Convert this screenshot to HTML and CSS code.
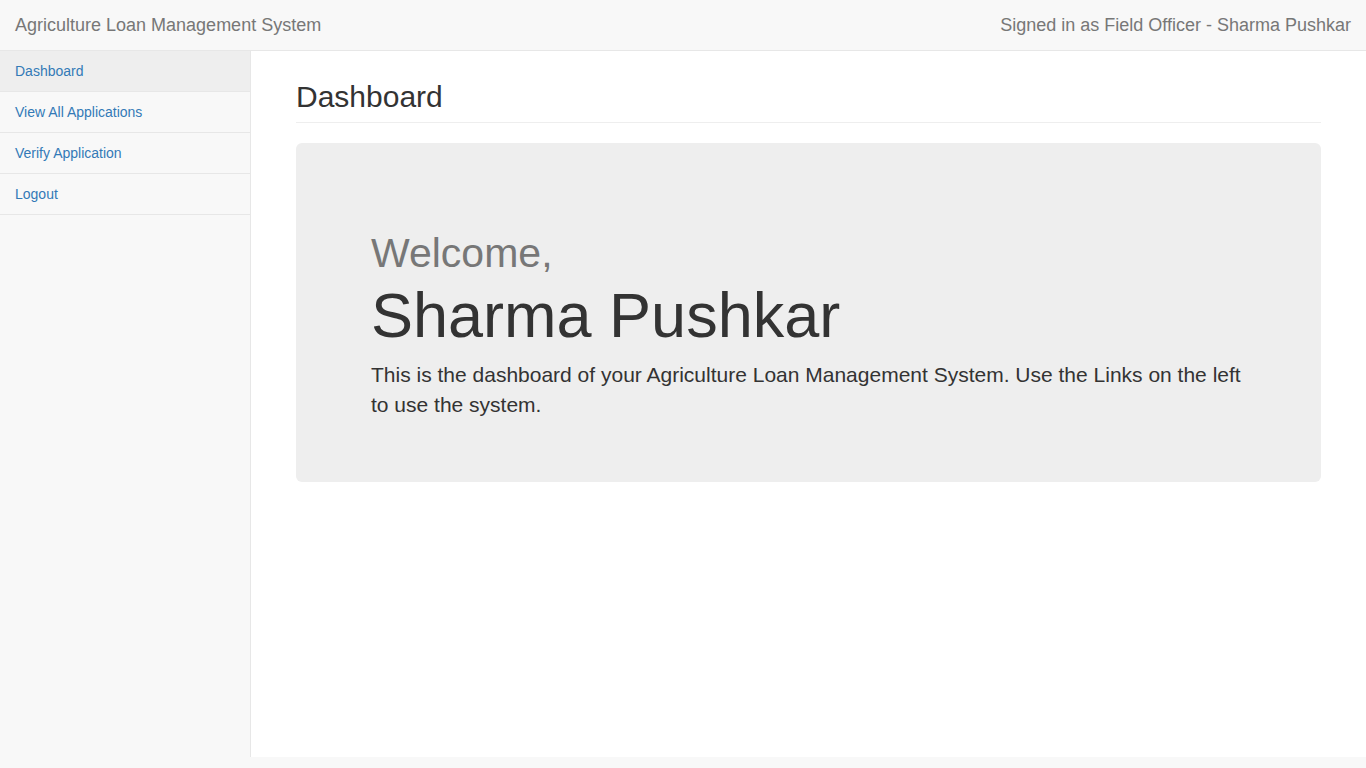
FILE: index.html
```html
<!DOCTYPE html>
<html lang="en">
<head>
<meta charset="utf-8">
<title>Agriculture Loan Management System</title>
<link rel="stylesheet" href="styles.css">
</head>
<body>
<nav class="topbar">
  <a class="brand" href="#">Agriculture Loan Management System</a>
  <span class="signed">Signed in as Field Officer - Sharma Pushkar</span>
</nav>
<div class="wrapper">
  <aside class="sidebar">
    <ul class="side-nav">
      <li class="active"><a href="#">Dashboard</a></li>
      <li><a href="#">View All Applications</a></li>
      <li><a href="#">Verify Application</a></li>
      <li><a href="#">Logout</a></li>
    </ul>
  </aside>
  <main class="page-wrapper">
    <div class="col">
      <h1 class="page-header">Dashboard</h1>
      <div class="jumbotron">
        <div class="jumbo-inner">
          <h2 class="welcome">Welcome,</h2>
          <h1 class="name">Sharma Pushkar</h1>
          <p class="lead">This is the dashboard of your Agriculture Loan Management System. Use the Links on the left to use the system.</p>
        </div>
      </div>
    </div>
  </main>
</div>
</body>
</html>
```

FILE: styles.css
```css
* { box-sizing: border-box; }

html, body {
  margin: 0;
  padding: 0;
}

body {
  background: #f8f8f8;
  font-family: "Liberation Sans", Arial, Helvetica, sans-serif;
  font-size: 14px;
  line-height: 1.42857143;
  color: #333;
}

a { text-decoration: none; }

.topbar {
  height: 51px;
  background: #f8f8f8;
  border-bottom: 1px solid #e7e7e7;
  display: flex;
  justify-content: space-between;
  align-items: center;
  padding: 0 15px;
}

.brand,
.signed {
  font-size: 18px;
  line-height: 20px;
  color: #777;
}

.wrapper {
  display: flex;
  align-items: stretch;
}

.sidebar {
  width: 250px;
  flex: 0 0 250px;
  background: #f8f8f8;
}

.side-nav {
  list-style: none;
  margin: 0;
  padding: 0;
}

.side-nav li {
  border-bottom: 1px solid #e7e7e7;
}

.side-nav li a {
  display: block;
  padding: 10px 15px;
  line-height: 20px;
  font-size: 14px;
  color: #337ab7;
}

.side-nav li.active a {
  background: #eee;
}

.page-wrapper {
  flex: 1;
  min-height: 706px;
  background: #fff;
  border-left: 1px solid #e7e7e7;
  padding: 0 30px;
}

.col {
  padding: 0 15px;
}

.page-header {
  margin: 29px 0 20px;
  padding-bottom: 9px;
  border-bottom: 1px solid #eee;
  font-size: 30px;
  font-weight: 500;
  line-height: 1.1;
  color: #333;
}

.jumbotron {
  background: #eee;
  border-radius: 6px;
  padding: 48px 60px 50px;
}

.jumbo-inner {
  padding: 0 15px;
  display: flex;
  flex-direction: column;
}

.welcome {
  margin: 40px 0 0;
  font-size: 41px;
  font-weight: 500;
  line-height: 1.1;
  color: #777;
}

.name {
  margin: 5px 0 0;
  font-size: 63px;
  font-weight: 500;
  line-height: 1.1;
  color: #333;
}

.lead {
  margin: 10px 0 12px;
  font-size: 21px;
  font-weight: 300;
  line-height: 30px;
  color: #333;
}
```
